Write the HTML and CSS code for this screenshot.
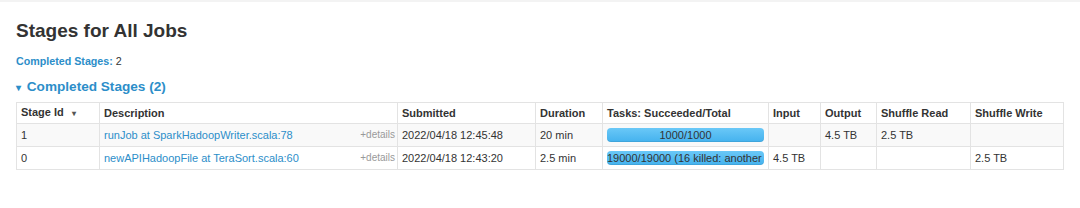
FILE: index.html
```html
<!DOCTYPE html>
<html lang="en">
<head>
    <meta charset="UTF-8">
    <title>Stages for All Jobs</title>
    <link rel="stylesheet" href="styles.css">
</head>
<body>
    <div class="navbar-edge"></div>
    <div class="container">
        <h3 class="page-title">Stages for All Jobs</h3>

        <ul class="summary">
            <li><a href="#completed"><strong>Completed Stages:</strong></a> 2</li>
        </ul>

        <h4 class="collapse-title" id="completed">
            <span class="arrow">&#9662;</span>
            <a href="#completed">Completed Stages (2)</a>
        </h4>

        <table class="stage-table">
            <thead>
                <tr>
                    <th class="col-id">Stage Id <span class="sort">&#9662;</span></th>
                    <th class="col-desc">Description</th>
                    <th class="col-sub">Submitted</th>
                    <th class="col-dur">Duration</th>
                    <th class="col-tasks">Tasks: Succeeded/Total</th>
                    <th class="col-in">Input</th>
                    <th class="col-out">Output</th>
                    <th class="col-sr">Shuffle Read</th>
                    <th class="col-sw">Shuffle Write</th>
                </tr>
            </thead>
            <tbody>
                <tr>
                    <td>1</td>
                    <td class="desc">
                        <a href="#">runJob at SparkHadoopWriter.scala:78</a>
                        <span class="expand-details">+details</span>
                    </td>
                    <td>2022/04/18 12:45:48</td>
                    <td>20 min</td>
                    <td class="progress-cell">
                        <div class="progress"><span class="progress-text">1000/1000</span></div>
                    </td>
                    <td></td>
                    <td>4.5 TB</td>
                    <td>2.5 TB</td>
                    <td></td>
                </tr>
                <tr>
                    <td>0</td>
                    <td class="desc">
                        <a href="#">newAPIHadoopFile at TeraSort.scala:60</a>
                        <span class="expand-details">+details</span>
                    </td>
                    <td>2022/04/18 12:43:20</td>
                    <td>2.5 min</td>
                    <td class="progress-cell">
                        <div class="progress"><span class="progress-text">19000/19000 (16 killed: another attempt succeeded)</span></div>
                    </td>
                    <td>4.5 TB</td>
                    <td></td>
                    <td></td>
                    <td>2.5 TB</td>
                </tr>
            </tbody>
        </table>
    </div>
</body>
</html>
```

FILE: styles.css
```css
* {
    margin: 0;
    padding: 0;
    box-sizing: border-box;
}

body {
    font-family: "Liberation Sans", Arial, sans-serif;
    font-size: 11px;
    line-height: 16px;
    color: #333;
    background: #fff;
}

a {
    color: #2c8ec9;
    text-decoration: none;
}

.navbar-edge {
    height: 2px;
    background: #f3f3f3;
}

.container {
    padding: 0 16px;
}

.page-title {
    font-size: 19px;
    font-weight: bold;
    line-height: 22px;
    margin-top: 18px;
    margin-bottom: 11px;
}

.summary {
    list-style: none;
    font-size: 10.7px;
    line-height: 16px;
    margin-bottom: 8px;
}

.collapse-title {
    font-size: 13.6px;
    font-weight: bold;
    line-height: 20px;
    color: #2c8ec9;
    margin-bottom: 4px;
}

.collapse-title .arrow {
    font-size: 10px;
    display: inline-block;
    width: 7px;
}

.stage-table {
    width: 100%;
    border-collapse: collapse;
    border: 1px solid #e3e3e3;
}

.stage-table th,
.stage-table td {
    border-left: 1px solid #e3e3e3;
    border-top: 1px solid #e3e3e3;
    padding: 0 4px;
    height: 23px;
    text-align: left;
    vertical-align: middle;
    white-space: nowrap;
}

.stage-table th {
    font-weight: bold;
    height: 21px;
}

.stage-table tbody tr:nth-child(odd) td {
    background: #f9f9f9;
}

.sort {
    font-size: 8px;
    margin-left: 5px;
    color: #555;
}

.col-id { width: 83px; }
.col-desc { width: 298px; }
.col-sub { width: 138px; }
.col-dur { width: 67px; }
.col-tasks { width: 165px; }
.col-in { width: 52px; }
.col-out { width: 56px; }
.col-sr { width: 94px; }

.desc {
    overflow: hidden;
}

.expand-details {
    float: right;
    font-size: 10px;
    color: #999;
    margin-right: -2px;
}

.progress {
    width: 157px;
    height: 14px;
    border-radius: 4px;
    background: linear-gradient(to bottom, #6ac8f7, #44b2ee);
    box-shadow: inset 0 -1px 0 rgba(0, 0, 0, 0.08);
    overflow: hidden;
}

.progress-text {
    display: block;
    text-align: center;
    font-size: 11px;
    line-height: 14px;
    color: #333;
    white-space: nowrap;
}
```
